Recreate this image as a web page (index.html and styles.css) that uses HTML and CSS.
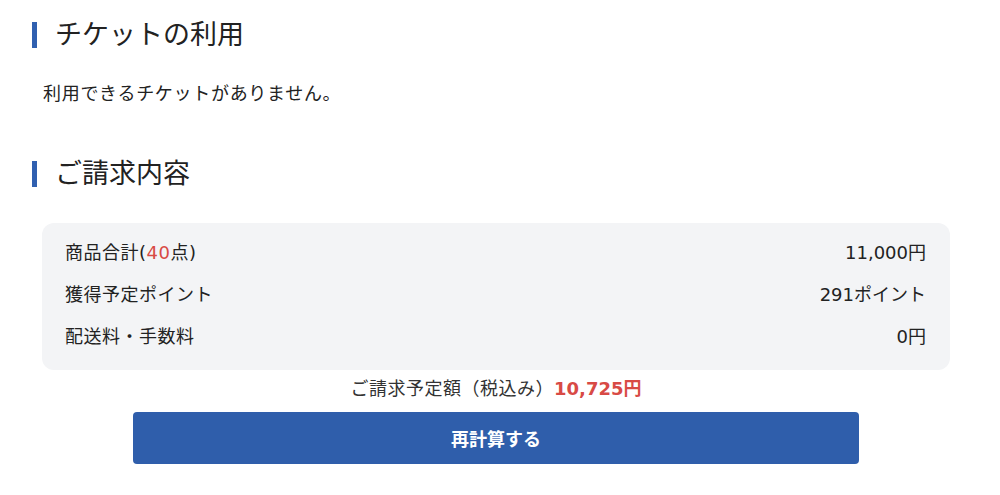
FILE: index.html
```html
<!DOCTYPE html>
<html lang="ja">
<head>
  <meta charset="UTF-8" />
  <title>ご請求内容</title>
  <link rel="stylesheet" href="styles.css">
</head>
<body>
<main class="page">

  <h2 class="section-title">チケットの利用</h2>
  <p class="note">利用できるチケットがありません。</p>

  <h2 class="section-title billing-title">ご請求内容</h2>

  <div class="billing">
    <div class="summary">
      <div class="summary-row">
        <span>商品合計(<span class="count">40</span>点)</span>
        <span>11,000円</span>
      </div>
      <div class="summary-row">
        <span>獲得予定ポイント</span>
        <span>291ポイント</span>
      </div>
      <div class="summary-row">
        <span>配送料・手数料</span>
        <span>0円</span>
      </div>
    </div>

    <div class="total">
      <span class="total-label">ご請求予定額（税込み）</span><span class="total-price">10,725円</span>
    </div>

    <button class="recalc" type="button">再計算する</button>
  </div>

</main>
</body>
</html>
```

FILE: styles.css
```css
html, body {
  margin: 0;
  padding: 0;
  background: white;
  color: #222;
  font-family: "DejaVu Sans", "Noto Sans CJK JP", sans-serif;
}

.page {
  width: 918px;
  padding: 22px 0 0 32px;
}

/* section headings with the blue bar on the left */
.section-title {
  margin: 0;
  border-left: 5px solid #3060b0;
  padding-left: 18px;
  height: 26px;
  font-size: 27px;
  font-weight: normal;
  line-height: 25px;
}

.note {
  margin: 34px 0 0 11px;
  font-size: 18px;
  line-height: 24px;
  letter-spacing: 0.7px;
}

.billing-title {
  margin-top: 55px;
}

.billing {
  margin: 36px 0 0 10px;
  display: flex;
  flex-direction: column;
  align-items: center;
}

/* grey summary box */
.summary {
  align-self: stretch;
  background: #f3f4f6;
  border-radius: 12px;
  padding: 7px 24px 14px 23px;
}
.summary-row {
  display: flex;
  justify-content: space-between;
  align-items: center;
  height: 42px;
  font-size: 18px;
}
.summary-row > span:first-child {
  letter-spacing: 0.5px;
}
.count {
  color: #d84a45;
}

.total {
  margin-top: 7px;
  font-size: 18px;
  line-height: 24px;
  color: #333;
}
.total-label {
  letter-spacing: 0.5px;
}
.total-price {
  color: #d84a45;
  font-weight: bold;
  font-size: 18px;
}

.recalc {
  margin-top: 11px;
  width: 726px;
  height: 52px;
  border: none;
  border-radius: 4px;
  background: #2f5eab;
  color: white;
  font-family: inherit;
  font-size: 18px;
  font-weight: bold;
  cursor: pointer;
}
```
